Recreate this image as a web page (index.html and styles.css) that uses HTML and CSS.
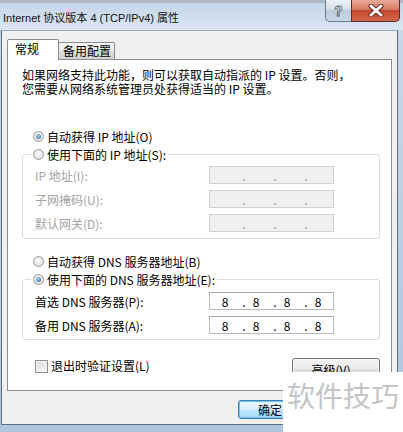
FILE: index.html
```html
<!DOCTYPE html>
<html lang="zh-CN">
  <head>
    <meta charset="UTF-8" />
    <meta name="viewport" content="width=device-width, initial-scale=1.0" />
    <title>Internet 协议版本 4 (TCP/IPv4) 属性</title>
    <link rel="stylesheet" href="styles.css">
  </head>
  <body>
    <div class="window">
      <div class="titlebar">
        <span class="title">Internet 协议版本 4 (TCP/IPv4) 属性</span>
        <div class="caption">
          <div class="cap-btn help">?</div>
          <div class="cap-btn close">
            <svg width="16" height="13" viewBox="0 0 16 13">
              <path d="M3 2 L13 11 M13 2 L3 11" stroke="#6b2a1f" stroke-width="5" stroke-linecap="round" />
              <path d="M3 2 L13 11 M13 2 L3 11" stroke="#ffffff" stroke-width="3" stroke-linecap="round" />
            </svg>
          </div>
        </div>
      </div>

      <div class="client">
        <div class="tabs">
          <div class="tab active">常规</div>
          <div class="tab other">备用配置</div>
        </div>
        <div class="panel">
          <div class="intro">
            <div>如果网络支持此功能，则可以获取自动指派的 IP 设置。否则，</div>
            <div>您需要从网络系统管理员处获得适当的 IP 设置。</div>
          </div>

          <div class="radio-row first"><span class="radio checked"></span>自动获得 IP 地址(O)</div>
          <fieldset class="group ip-group">
            <legend><span class="radio"></span>使用下面的 IP 地址(S):</legend>
            <div class="field off">
              <label>IP 地址(I):</label>
              <div class="ip"><span></span><span class="dot">.</span><span></span><span class="dot">.</span><span></span><span class="dot">.</span><span></span></div>
            </div>
            <div class="field off">
              <label>子网掩码(U):</label>
              <div class="ip"><span></span><span class="dot">.</span><span></span><span class="dot">.</span><span></span><span class="dot">.</span><span></span></div>
            </div>
            <div class="field off">
              <label>默认网关(D):</label>
              <div class="ip"><span></span><span class="dot">.</span><span></span><span class="dot">.</span><span></span><span class="dot">.</span><span></span></div>
            </div>
          </fieldset>

          <div class="radio-row dns-auto"><span class="radio"></span>自动获得 DNS 服务器地址(B)</div>
          <fieldset class="group dns-group">
            <legend><span class="radio checked"></span>使用下面的 DNS 服务器地址(E):</legend>
            <div class="field">
              <label>首选 DNS 服务器(P):</label>
              <div class="ip"><span>8</span><span class="dot">.</span><span>8</span><span class="dot">.</span><span>8</span><span class="dot">.</span><span>8</span></div>
            </div>
            <div class="field">
              <label>备用 DNS 服务器(A):</label>
              <div class="ip"><span>8</span><span class="dot">.</span><span>8</span><span class="dot">.</span><span>8</span><span class="dot">.</span><span>8</span></div>
            </div>
          </fieldset>

          <div class="panel-foot">
            <label class="check"><span class="box"></span>退出时验证设置(L)</label>
            <button class="btn">高级(V)...</button>
          </div>
        </div>

        <div class="dlg-foot">
          <button class="btn default">确定</button>
        </div>
      </div>

      <div class="watermark">软件技巧</div>
    </div>
  </body>
</html>
```

FILE: styles.css
```css
body {
  margin: 0;
  width: 403px;
  height: 432px;
  overflow: hidden;
  background: linear-gradient(#c9d9ea, #aec6e0);
  font-family: "Noto Sans CJK SC", sans-serif;
  font-size: 12px;
  color: #000;
}

.window {
  position: relative;
  height: 432px;
}

/* title bar */
.titlebar {
  height: 30px;
  display: flex;
  align-items: flex-start;
  background: linear-gradient(#aeb9c5 0, #aeb9c5 3px, #c5d6e8 3px, #dae6f1 30px);
}

.title {
  flex: 1;
  padding: 10px 0 0 3px;
  line-height: 16px;
  font-family: "Liberation Sans", "Noto Sans CJK SC", sans-serif;
  font-size: 11px;
  color: #111;
}

.caption {
  display: flex;
  margin-right: 3px;
}

.cap-btn {
  height: 22px;
  box-sizing: border-box;
  display: flex;
  align-items: center;
  justify-content: center;
}

.help {
  width: 26px;
  border: 1px solid #6d7a8a;
  border-top: none;
  border-right: none;
  border-radius: 0 0 0 5px;
  background: linear-gradient(#edf1f6, #d5dee8 45%, #bccbdb 50%, #cad7e5);
  font: bold 14px "Liberation Sans", sans-serif;
  color: #fff;
  -webkit-text-stroke: 0.8px #4e5866;
}

.close {
  width: 49px;
  border: 1px solid #5d2c24;
  border-top: none;
  border-radius: 0 0 5px 0;
  background: linear-gradient(#e8aa97, #d67b64 45%, #c3472e 50%, #d3674c);
}

/* dialog body */
.client {
  margin-left: 1px;
  width: 397px;
  height: 395px;
  box-sizing: border-box;
  border: 1px solid #5f6c7b;
  border-top-color: #98a5b3;
  background: #f0f0f0;
  padding: 8px 0 0 5px;
}

.tabs {
  display: flex;
  align-items: flex-end;
  height: 20px;
}

.tab {
  box-sizing: border-box;
  border: 1px solid #898c95;
  border-bottom: none;
  line-height: 16px;
  border-radius: 2px 2px 0 0;
}

.tab.active {
  width: 52px;
  height: 21px;
  margin-bottom: -1px;
  padding: 1px 0 0 7px;
  background: #fff;
  position: relative;
  z-index: 1;
}

.tab.other {
  width: 57px;
  height: 17px;
  margin-left: -1px;
  padding: 0 0 0 4px;
  background: linear-gradient(#f4f4f4, #ececec 50%, #dedede 50%, #d2d2d2);
}

.panel {
  width: 385px;
  height: 332px;
  box-sizing: border-box;
  border: 1px solid #898c95;
  background: #fff;
}

.intro {
  margin: 8px 0 0 14px;
  line-height: 14px;
  white-space: nowrap;
}

.intro div {
  height: 14px;
}

.radio-row {
  display: flex;
  align-items: center;
  height: 18px;
  margin-left: 25px;
}

.radio-row.first {
  margin-top: 31px;
}

.radio-row.dns-auto {
  margin-top: 13px;
}

.radio {
  width: 11px;
  height: 11px;
  flex-shrink: 0;
  box-sizing: border-box;
  border-radius: 50%;
  border: 1px solid #9a9a9a;
  background: radial-gradient(circle at 50% 40%, #fdfdfd, #d4d4d4);
  margin-right: 3px;
  display: flex;
  align-items: center;
  justify-content: center;
}

.radio.checked::after {
  content: "";
  width: 5px;
  height: 5px;
  border-radius: 50%;
  background: radial-gradient(circle at 40% 35%, #a3d6fa, #1c5f9f);
}

.group {
  margin: 0 0 0 14px;
  width: 358px;
  min-width: 0;
  box-sizing: border-box;
  border: 1px solid #d5dfe5;
  border-radius: 3px;
  padding: 3px 0 6px 12px;
}

.dns-group {
  padding: 4px 0 5px 12px;
}

.group legend {
  display: flex;
  align-items: center;
  height: 18px;
  padding: 0 2px;
  margin-left: -4px;
}

.field {
  display: flex;
  align-items: center;
  height: 18px;
}

.field + .field {
  margin-top: 6px;
}

.field label {
  width: 174px;
}

.ip {
  width: 125px;
  height: 18px;
  box-sizing: border-box;
  border: 1px solid #b5b9c0;
  border-top-color: #a3a7ae;
  background: #fff;
  display: flex;
  align-items: center;
  padding-left: 9px;
}

.ip span {
  width: 12px;
  text-align: center;
}

.ip .dot {
  margin-left: 7px;
}

.field.off label {
  color: #a3a3a3;
}

.field.off .ip {
  background: #f0f0f0;
  border-color: #d2d2d2;
}

.field.off .dot {
  color: #9a9a9a;
}

.panel-foot {
  display: flex;
  justify-content: space-between;
  align-items: flex-start;
  margin: 18px 11px 0 27px;
}

.check {
  display: flex;
  align-items: center;
  line-height: 14px;
  margin-top: 1px;
}

.box {
  width: 13px;
  height: 13px;
  box-sizing: border-box;
  border: 1px solid #8f8f8f;
  background: linear-gradient(135deg, #d8d8d8, #fbfbfb);
  box-shadow: inset 0 0 0 1px #f4f4f4;
  margin-right: 3px;
}

.btn {
  font: 12px "Noto Sans CJK SC", sans-serif;
  width: 88px;
  height: 23px;
  padding: 0;
  color: #000;
  border: 1px solid #707070;
  border-radius: 3px;
  background: linear-gradient(#f2f2f2, #ebebeb 50%, #dddddd 50%, #cfcfcf);
  box-shadow: inset 0 0 0 1px #fbfbfb;
}

.dlg-foot {
  display: flex;
  margin: 9px 0 0 231px;
}

.btn.default {
  width: 64px;
  height: 19px;
  border-color: #3c7fb1;
  background: linear-gradient(#eaf6fd, #d9f0fc 50%, #bee6fd 50%, #a7d9f5);
  box-shadow: inset 0 0 0 1px #6fc4ee;
}

/* site watermark over the corner */
.watermark {
  position: absolute;
  left: 283px;
  top: 372px;
  width: 120px;
  height: 60px;
  box-sizing: border-box;
  padding: 9px 0 0 4px;
  background: #fff;
  color: #c4c4c4;
  font: 28px/1 "Noto Sans CJK SC", sans-serif;
  white-space: nowrap;
}
```
